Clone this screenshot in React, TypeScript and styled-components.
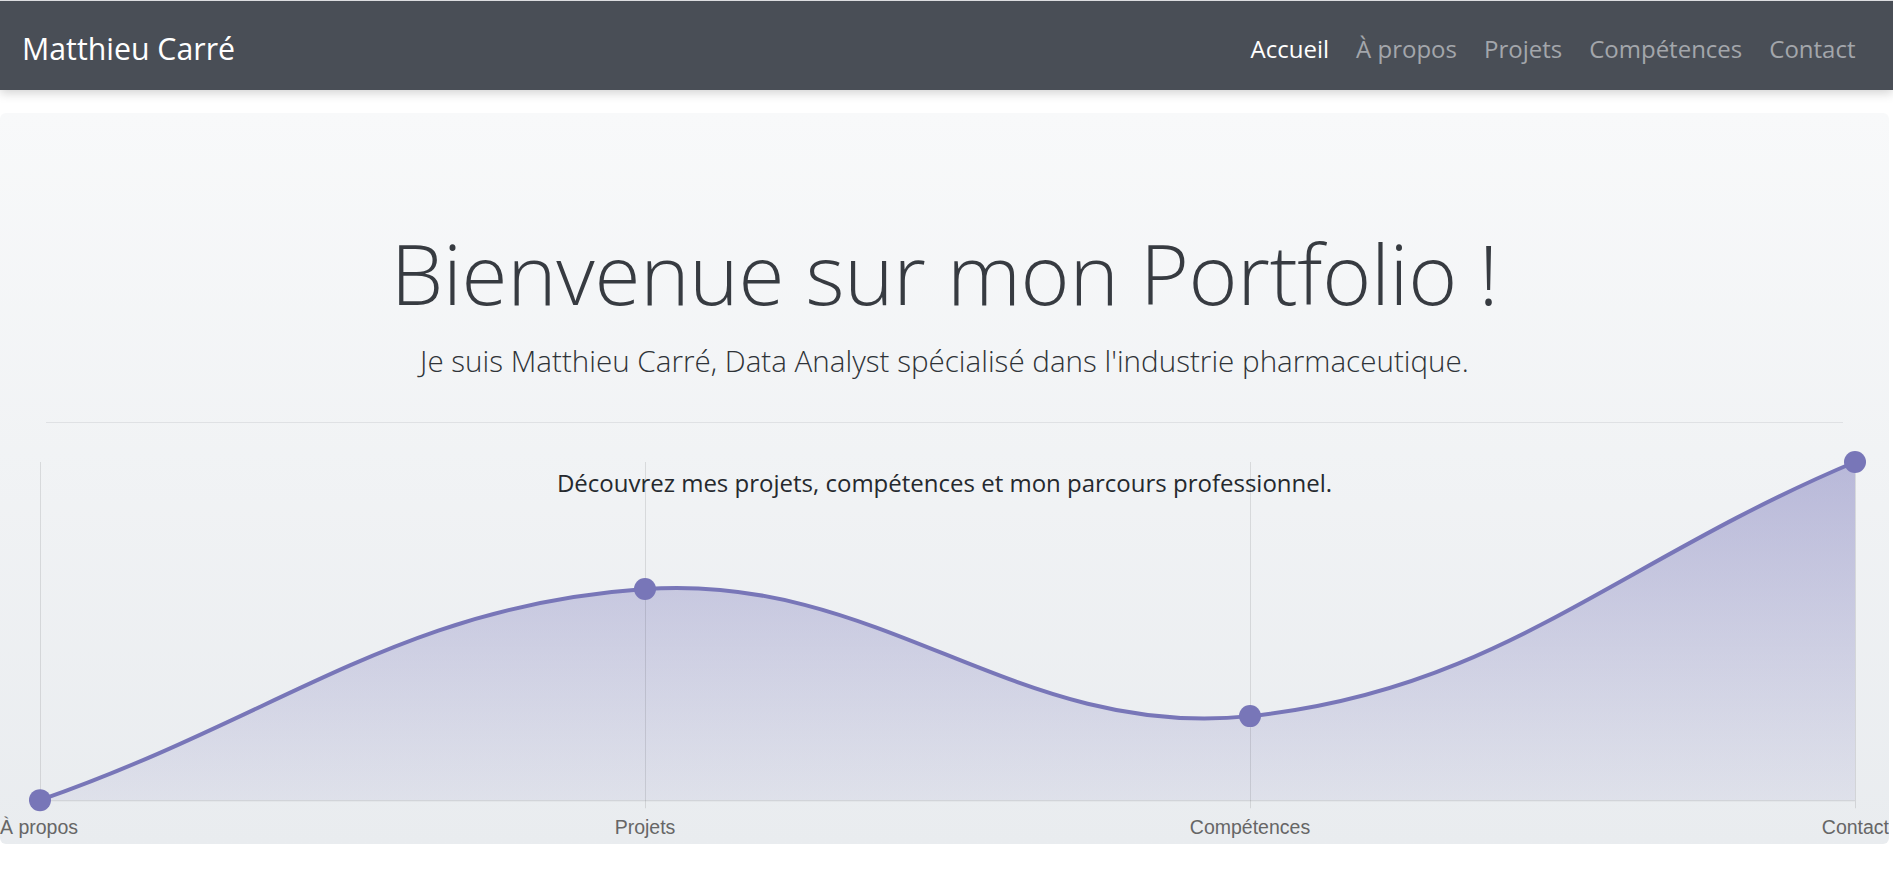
import React from "react";
import styled, { createGlobalStyle } from "styled-components";

const GlobalStyle = createGlobalStyle`
  html, body { margin: 0; padding: 0; background: #ffffff; }
  body {
    font-family: "Open Sans", "Noto Sans", "Liberation Sans", sans-serif;
    color: #212529;
    overflow: hidden;
  }
  * { box-sizing: border-box; }
`;

const Page = styled.div`
  width: 1893px;
  height: 879px;
  display: flex;
  flex-direction: column;
`;

const Navbar = styled.nav`
  height: 90px;
  border-top: 1px solid #dcdde0;
  background: #494e56;
  box-shadow: 0 3px 10px rgba(0, 0, 0, 0.18);
  display: flex;
  align-items: center;
  justify-content: space-between;
  padding: 5px 24px 0 22px;
  position: relative;
  z-index: 2;
`;

const Brand = styled.a`
  font-size: 30.3px;
  color: #ffffff;
  text-decoration: none;
`;

const NavList = styled.ul`
  list-style: none;
  margin: 0;
  padding: 0;
  display: flex;
`;

const NavLink = styled.a<{ $active?: boolean }>`
  display: block;
  padding: 0 13.5px;
  font-size: 24px;
  text-decoration: none;
  color: ${(p) => (p.$active ? "#ffffff" : "#a3a6ab")};
`;

const Hero = styled.section`
  margin: 23px 4px 0 0;
  height: 731px;
  border-radius: 6px;
  background: linear-gradient(180deg, #f8f9fa 0%, #e9ecef 100%);
  display: flex;
  flex-direction: column;
  align-items: center;
  padding-top: 110px;
`;

const Title = styled.h1`
  margin: 0;
  font-size: 83.7px;
  font-weight: 300;
  line-height: 1.2;
  color: #373b41;
  letter-spacing: -0.3px;
`;

const Lead = styled.p`
  margin: 16px 0 0;
  font-size: 29.6px;
  font-weight: 300;
  line-height: 1.5;
  color: #2f3338;
`;

const Divider = styled.hr`
  align-self: stretch;
  margin: 38px 46px 0 46px;
  border: 0;
  border-top: 1px solid #dfe1e4;
  height: 0;
`;

const ChartWrap = styled.div`
  position: relative;
  align-self: stretch;
  flex: 1;
`;

const ChartSvg = styled.svg`
  display: block;
  width: 100%;
  height: 100%;
`;

const Tagline = styled.p`
  position: absolute;
  top: 42px;
  left: 0;
  right: 0;
  margin: 0;
  text-align: center;
  font-size: 24px;
  line-height: 1.5;
  color: #25292e;
`;

const links = ["Accueil", "À propos", "Projets", "Compétences", "Contact"];

const pts = [
  { x: 40, y: 800, label: "À propos" },
  { x: 645, y: 589, label: "Projets" },
  { x: 1250, y: 716, label: "Compétences" },
  { x: 1855, y: 462, label: "Contact" },
];

const curve =
  "M40,800 C282,715.6 398.6,606.1 645,589 C882.6,572.5 1015.3,740.6 1250,716 C1499.3,689.8 1613,563.6 1855,462";

function Chart() {
  return (
    <ChartSvg viewBox="0 423 1889 421" preserveAspectRatio="none">
      <defs>
        <linearGradient id="fillGrad" x1="0" y1="462" x2="0" y2="800" gradientUnits="userSpaceOnUse">
          <stop offset="0" stopColor="rgb(118,116,184)" stopOpacity="0.46" />
          <stop offset="1" stopColor="rgb(118,116,184)" stopOpacity="0.1" />
        </linearGradient>
      </defs>
      <path d={`${curve} L1855,800 L40,800 Z`} fill="url(#fillGrad)" />
      {pts.map((p) => (
        <line key={p.label} x1={p.x + 0.5} y1={462} x2={p.x + 0.5} y2={808} stroke="rgba(0,0,0,0.1)" strokeWidth={1} />
      ))}
      <line x1={40} y1={800.5} x2={1855} y2={800.5} stroke="rgba(0,0,0,0.12)" strokeWidth={1} />
      <path d={curve} fill="none" stroke="#7876b8" strokeWidth={4} />
      {pts.map((p) => (
        <circle key={p.label + "c"} cx={p.x} cy={p.y} r={11} fill="#7876b8" />
      ))}
      {pts.map((p, i) => (
        <text
          key={p.label + "t"}
          x={i === 0 ? 0 : i === pts.length - 1 ? 1889 : p.x}
          y={834}
          textAnchor={i === 0 ? "start" : i === pts.length - 1 ? "end" : "middle"}
          fontFamily="'Liberation Sans', Arial, sans-serif"
          fontSize={19.5}
          fill="#666666"
        >
          {p.label}
        </text>
      ))}
    </ChartSvg>
  );
}

export default function App() {
  return (
    <>
      <GlobalStyle />
      <Page>
        <Navbar>
          <Brand href="#">Matthieu Carré</Brand>
          <NavList>
            {links.map((l, i) => (
              <li key={l}>
                <NavLink href="#" $active={i === 0}>
                  {l}
                </NavLink>
              </li>
            ))}
          </NavList>
        </Navbar>
        <Hero>
          <Title>Bienvenue sur mon Portfolio !</Title>
          <Lead>Je suis Matthieu Carré, Data Analyst spécialisé dans l'industrie pharmaceutique.</Lead>
          <Divider />
          <ChartWrap>
            <Chart />
            <Tagline>Découvrez mes projets, compétences et mon parcours professionnel.</Tagline>
          </ChartWrap>
        </Hero>
      </Page>
    </>
  );
}
